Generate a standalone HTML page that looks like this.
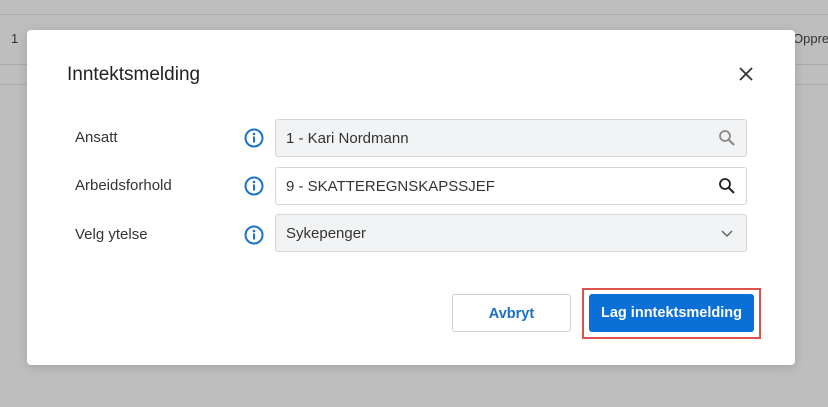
<!DOCTYPE html>
<html><head><style>
body{margin:0;width:828px;height:407px;background:#bebebe;font-family:"Liberation Sans",Arial,sans-serif;position:relative;overflow:hidden}
.ln{position:absolute;left:0;width:828px;height:1px;background:#a9a9a9}
.modal{position:absolute;left:27px;top:30px;width:768px;height:335px;background:#fff;border-radius:4px;box-shadow:0 2px 10px rgba(0,0,0,.15)}
.t{position:absolute;left:40px;top:34px;font-size:19px;color:#222}
.lab{position:absolute;left:48px;font-size:15px;color:#333}
.info{position:absolute;left:217px;width:20px;height:20px}
.f{position:absolute;left:248px;width:460px;height:36px;border:1px solid #d6d6d6;border-radius:3px;background:#f2f3f4;font-size:15px;color:#333;line-height:37px;padding-left:10px;box-sizing:content-box}
.f svg{position:absolute;right:10px;top:9px}
.btn{position:absolute;top:264px;height:38px;border-radius:3px;font-size:14.5px;font-weight:bold;text-align:center;line-height:38px;box-sizing:border-box}
</style></head><body>
<div class="ln" style="top:14px"></div>
<div class="ln" style="top:64px"></div>
<div class="ln" style="top:84px"></div>
<div style="position:absolute;left:11px;top:31px;font-size:13px;color:#333">1</div>
<div style="position:absolute;left:793px;top:31px;font-size:13px;color:#333">Oppre</div>
<div class="modal">
<div class="t">Inntektsmelding</div>
<svg style="position:absolute;left:712px;top:37px" width="14" height="14" viewBox="0 0 14 14"><path d="M1 1L13 13M13 1L1 13" stroke="#333" stroke-width="1.8"/></svg>
<div class="lab" style="top:99px">Ansatt</div>
<div class="lab" style="top:147px">Arbeidsforhold</div>
<div class="lab" style="top:196px">Velg ytelse</div>
<svg class="info" style="top:98px" viewBox="0 0 20 20"><circle cx="10" cy="10" r="8.5" fill="none" stroke="#1a73c8" stroke-width="2"/><circle cx="10" cy="6" r="1.3" fill="#1a73c8"/><rect x="9" y="8.5" width="2" height="6" fill="#1a73c8"/></svg>
<svg class="info" style="top:146px" viewBox="0 0 20 20"><circle cx="10" cy="10" r="8.5" fill="none" stroke="#1a73c8" stroke-width="2"/><circle cx="10" cy="6" r="1.3" fill="#1a73c8"/><rect x="9" y="8.5" width="2" height="6" fill="#1a73c8"/></svg>
<svg class="info" style="top:195px" viewBox="0 0 20 20"><circle cx="10" cy="10" r="8.5" fill="none" stroke="#1a73c8" stroke-width="2"/><circle cx="10" cy="6" r="1.3" fill="#1a73c8"/><rect x="9" y="8.5" width="2" height="6" fill="#1a73c8"/></svg>
<div class="f" style="top:89px">1 - Kari Nordmann<svg width="18" height="18" viewBox="0 0 18 18"><circle cx="7" cy="7" r="5" fill="none" stroke="#888" stroke-width="1.8"/><path d="M11 11L16 16" stroke="#888" stroke-width="2"/></svg></div>
<div class="f" style="top:137px;background:#fff">9 - SKATTEREGNSKAPSSJEF<svg width="18" height="18" viewBox="0 0 18 18"><circle cx="7" cy="7" r="5" fill="none" stroke="#222" stroke-width="1.8"/><path d="M11 11L16 16" stroke="#222" stroke-width="2"/></svg></div>
<div class="f" style="top:184px">Sykepenger<svg width="18" height="18" viewBox="0 0 18 18"><path d="M4 7L9 12L14 7" fill="none" stroke="#666" stroke-width="1.5"/></svg></div>
<div class="btn" style="left:425px;width:119px;border:1px solid #cfcfcf;color:#1a6fc8;background:#fff">Avbryt</div>
<div style="position:absolute;left:555px;top:258px;width:179px;height:51px;border:2px solid #d9534f;box-sizing:border-box"></div>
<div class="btn" style="left:562px;width:165px;background:#0b6fd8;color:#fff">Lag inntektsmelding</div>
</div>
</body></html>
